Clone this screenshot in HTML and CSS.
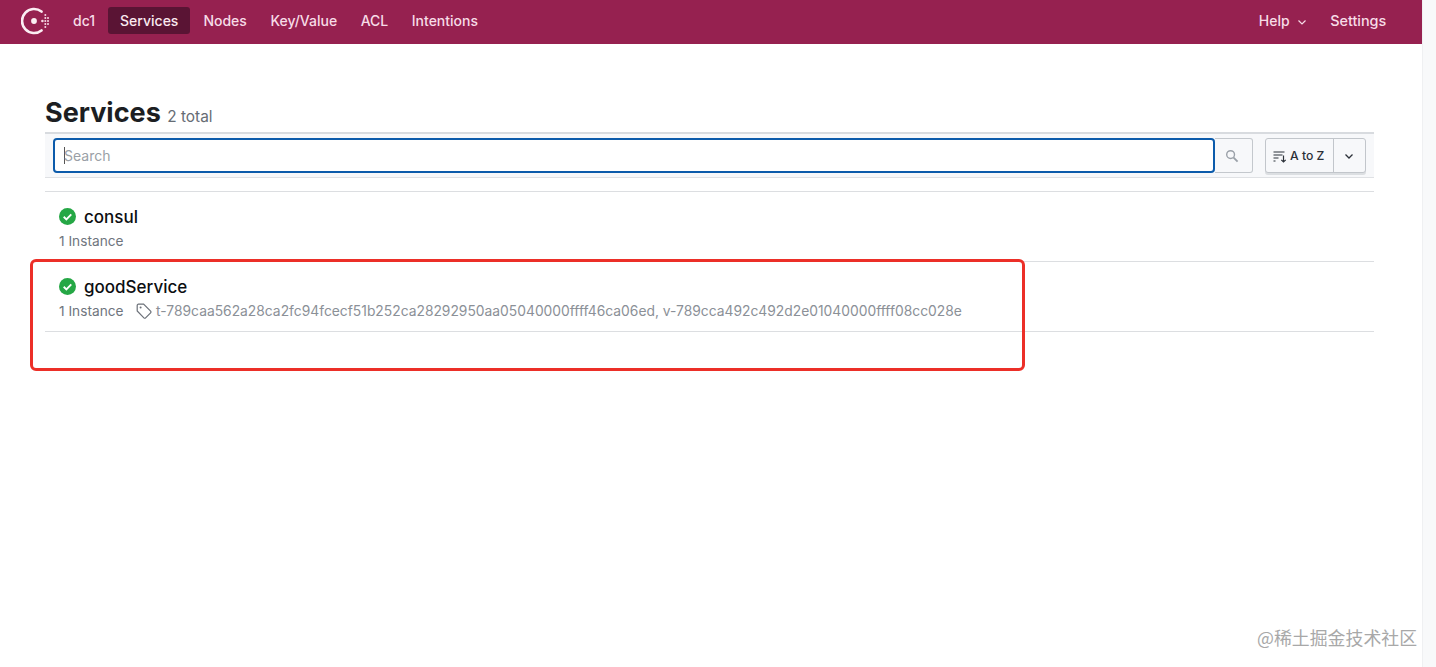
FILE: index.html
```html
<!DOCTYPE html>
<html lang="en">
<head>
<meta charset="utf-8">
<title>Services - Consul</title>
<link rel="stylesheet" href="styles.css">
</head>
<body>
<div class="page">
  <div class="main">
    <header class="topbar">
      <nav class="nav">
        <svg class="logo" viewBox="0 0 28 28" width="28" height="28">
          <path d="M20.5 4.6A12 12 0 1 0 20.5 23.4" fill="none" stroke="#fbeef3" stroke-width="2.6" stroke-linecap="round"/>
          <circle cx="13" cy="14" r="2.9" fill="#fbeef3"/>
          <g fill="#f7d9e4">
            <circle cx="21.4" cy="14" r="1.3"/><circle cx="24.3" cy="14" r="1"/><circle cx="27" cy="14" r="1"/>
            <circle cx="24.3" cy="11" r="1"/><circle cx="27" cy="11" r="1"/><circle cx="24.3" cy="17" r="1"/><circle cx="27" cy="17" r="1"/>
            <circle cx="24.3" cy="8" r="1"/><circle cx="24.3" cy="20" r="1"/>
          </g>
        </svg>
        <a class="nav-item dc">dc1</a>
        <a class="nav-item active">Services</a>
        <a class="nav-item">Nodes</a>
        <a class="nav-item">Key/Value</a>
        <a class="nav-item">ACL</a>
        <a class="nav-item">Intentions</a>
      </nav>
      <nav class="nav nav-right">
        <a class="nav-item help">Help
          <svg class="help-chev" viewBox="0 0 10 10" width="10" height="10"><path d="M1.5 3.5L5 7l3.5-3.5" fill="none" stroke="#f7dce7" stroke-width="1.2"/></svg>
        </a>
        <a class="nav-item settings">Settings</a>
      </nav>
    </header>

    <main class="content">
      <h1 class="title">Services <span class="count">2 total</span></h1>

      <div class="toolbar">
        <div class="search">
          <div class="search-input"><span class="caret"></span><span class="placeholder">Search</span></div>
          <div class="search-btn">
            <svg viewBox="0 0 14 14" width="14" height="14"><circle cx="5.6" cy="5.6" r="3.9" fill="none" stroke="#9aa0a8" stroke-width="1.4"/><path d="M8.6 8.6l4 4" stroke="#9aa0a8" stroke-width="1.8"/></svg>
          </div>
        </div>
        <div class="sort">
          <div class="sort-main">
            <svg viewBox="0 0 14 14" width="14" height="14"><path d="M0.5 3h11M0.5 6h9M0.5 9h5M0.5 12h2" stroke="#2b3038" stroke-width="1.2" fill="none"/><path d="M10.5 6.5v6.5M8.3 10.8l2.2 2.2 2.2-2.2" stroke="#2b3038" stroke-width="1.2" fill="none"/></svg>
            <span>A to Z</span>
          </div>
          <div class="sort-arrow">
            <svg viewBox="0 0 10 10" width="10" height="10"><path d="M1.5 3.5L5 7l3.5-3.5" fill="none" stroke="#2b3038" stroke-width="1.3"/></svg>
          </div>
        </div>
      </div>

      <ul class="services">
        <li class="service">
          <div class="service-name">
            <svg class="check" viewBox="0 0 18 18" width="17" height="17"><circle cx="9" cy="9" r="9" fill="#25a745"/><path d="M5 9.3l2.8 2.7L13 6.7" fill="none" stroke="#fff" stroke-width="2"/></svg>
            consul
          </div>
          <div class="service-meta"><span>1 Instance</span></div>
        </li>
        <li class="service">
          <div class="service-name">
            <svg class="check" viewBox="0 0 18 18" width="17" height="17"><circle cx="9" cy="9" r="9" fill="#25a745"/><path d="M5 9.3l2.8 2.7L13 6.7" fill="none" stroke="#fff" stroke-width="2"/></svg>
            goodService
          </div>
          <div class="service-meta">
            <span>1 Instance</span>
            <svg class="tag" viewBox="0 0 16 16" width="16" height="16"><path d="M1.2 2.4a1.2 1.2 0 0 1 1.2-1.2h5.2l7 7a1.2 1.2 0 0 1 0 1.7l-5 5a1.2 1.2 0 0 1-1.7 0l-6.7-7z" fill="none" stroke="#6b7078" stroke-width="1.2"/><circle cx="4.6" cy="4.6" r="1" fill="#6b7078"/></svg>
            <span class="tags">t-789caa562a28ca2fc94fcecf51b252ca28292950aa05040000ffff46ca06ed, v-789cca492c492d2e01040000ffff08cc028e</span>
          </div>
        </li>
      </ul>
    </main>
  </div>
  <div class="gutter"></div>
</div>
<div class="highlight"></div>
<div class="watermark">@稀土掘金技术社区</div>
</body>
</html>
```
FILE: styles.css
```css
* { box-sizing: border-box; }
html, body { margin: 0; padding: 0; height: 100%; overflow: hidden; background: #fff; }
body { font-family: Inter, "Liberation Sans", sans-serif; color: #1f2328; position: relative; }
.page { display: flex; height: 667px; }
.main { width: 1422px; flex: none; }
.gutter { flex: 1; background: #f8f9fa; border-left: 1px solid #eff0f2; }

.topbar { height: 44px; background: #962150; display: flex; justify-content: space-between; align-items: center; padding: 0 24px 3px 21px; }
.nav { display: flex; align-items: center; }
.logo { margin-right: 12px; }
.nav-item { font-size: 14px; font-weight: 500; line-height: 27px; height: 27px; color: #f7dce7; padding: 0 11.75px; border-radius: 3px; white-space: nowrap; }
.nav-item.dc { padding: 0 13px 0 12px; }
.nav-item.active { background: #5a1434; color: #fbe9f0; padding: 0 12px; margin: 0 1.25px 0 0; }
.help { display: flex; align-items: center; gap: 7px; margin-left: -1px; }
.help-chev { margin-top: 2px; }
.settings { font-size: 14.4px; }

.content { padding: 0 48px 0 45px; }
.title { margin: 50px 0 0; height: 38px; font-size: 27px; line-height: 38px; font-weight: 700; color: #1c1e22; white-space: nowrap; }
.count { font-size: 15.4px; font-weight: 400; color: #666c74; }

.toolbar { height: 46px; background: #f7f8fa; border-top: 2px solid #d8dbdf; border-bottom: 1px solid #dfe1e4; display: flex; padding: 4px 8px 0; justify-content: space-between; width: 1329px; }
.search { display: flex; }
.search-input { width: 1162px; height: 35px; background: #fff; border: 2px solid #0c5bab; border-radius: 4px; display: flex; align-items: center; padding-left: 9px; font-size: 14px; color: #9a9fa6; }
.caret { width: 1px; height: 17px; background: #555; margin-right: -1px; }
.search-btn { width: 38px; height: 35px; border: 1px solid #c4c8cd; border-left: 0; border-radius: 0 3px 3px 0; display: flex; align-items: center; justify-content: center; padding-right: 3px; background: #f7f8fa; }

.sort { display: flex; height: 35px; border: 1px solid #c2c6cb; border-radius: 3px; background: #f7f8fa; box-shadow: 0 2px 0 #dcdfe2; margin-left: 12px; }
.sort-main { width: 68px; display: flex; align-items: center; gap: 3px; padding-left: 7px; font-size: 12.2px; font-weight: 500; color: #2b3038; border-right: 1px solid #c2c6cb; white-space: nowrap; }
.sort-arrow { width: 31px; display: flex; align-items: center; justify-content: center; padding-right: 2px; }

.services { list-style: none; margin: 13px 0 0; padding: 0; width: 1329px; border-top: 1px solid #dcdee1; }
.service { height: 70px; border-bottom: 1px solid #dcdee1; padding: 15px 0 0 14px; }
.service-name { display: flex; align-items: center; font-size: 17px; line-height: 21px; font-weight: 500; color: #0c0e11; }
.check { margin-right: 8px; margin-top: -3px; }
.service-meta { display: flex; align-items: center; margin-top: 3px; height: 20px; font-size: 13.7px; color: #6f757d; white-space: nowrap; }
.tag { margin-left: 12px; margin-right: 4.5px; }
.tags { color: #8b9097; font-size: 13.83px; }

.highlight { position: absolute; left: 30px; top: 259px; width: 995px; height: 112px; border: 3px solid #ec2f28; border-radius: 6px; }
.watermark { position: absolute; left: 1257px; top: 626px; font-family: "Noto Sans CJK SC", "Liberation Sans", sans-serif; font-size: 17.9px; line-height: 22px; color: #a8a8a8; white-space: nowrap; }
```
